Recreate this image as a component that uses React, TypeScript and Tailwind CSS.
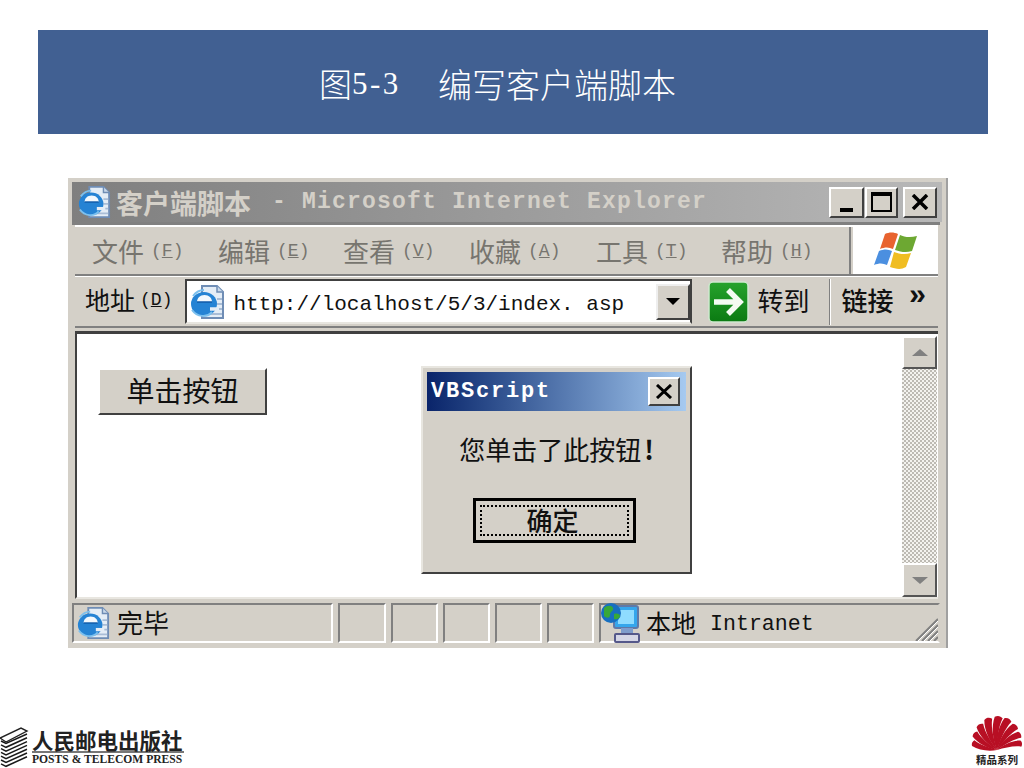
const mono = "[font-family:'Liberation_Mono','Noto_Sans_CJK_SC',monospace]";
const cjk = "[font-family:'Noto_Sans_CJK_SC','Liberation_Sans',sans-serif]";

function IeIcon({ size = 36 }: { size?: number }) {
  return (
    <svg width={size} height={size} viewBox="0 0 36 36">
      <path d="M13 2h15l6 6v26H13z" fill="#e4edf6" stroke="#6f8db5" strokeWidth="2" />
      <path d="M28 2v6h6" fill="#c9d9ea" stroke="#6f8db5" strokeWidth="1.500" />
      <path d="M20 30h13M26 25h7M28 20h5M28 15h5" stroke="#a9bdd6" strokeWidth="2" />
      <ellipse cx="15" cy="20" rx="13" ry="12" fill="#2583d4" />
      <path d="M8 18c0-4 3-7 7.500-7S23 14 23 18z" fill="#f2f8fd" />
      <path d="M8 18h15" stroke="#0f5aa8" strokeWidth="1.500" />
      <path d="M21 25h9" stroke="#e4edf6" strokeWidth="3.500" />
      <path d="M3 26c5 7 15 8 20 2" fill="none" stroke="#7cc0ee" strokeWidth="2" />
      <path d="M4 12c3-4 7-6 11-6" fill="none" stroke="#7cc0ee" strokeWidth="2" />
    </svg>
  );
}

function WinFlag() {
  return (
    <svg width="44" height="40" viewBox="0 0 44 40">
      <path d="M11 3c4-2 9-2 13 0l-5 15c-4-2-8-2-13 0z" fill="#e8632f" />
      <path d="M26 4c4 2 10 3 17 1l-5 15c-6 2-11 1-17-1z" fill="#6da832" />
      <path d="M5 20c5-2 9-2 13 0l-5 14c-4-2-8-2-13 0z" fill="#4b8fe0" />
      <path d="M20 21c5 2 11 3 17 1l-5 14c-5 3-10 2-16 0z" fill="#f0bd22" />
    </svg>
  );
}

function GoIcon() {
  return (
    <svg width="41" height="42" viewBox="0 0 41 42">
      <defs>
        <linearGradient id="goGrad" x1="0" y1="0" x2="0" y2="1">
          <stop offset="0" stopColor="#26a32c" />
          <stop offset="1" stopColor="#0b7a12" />
        </linearGradient>
      </defs>
      <rect x="1" y="1" width="39" height="40" rx="4" fill="url(#goGrad)" stroke="#cfe8cf" strokeWidth="1.500" />
      <path d="M6 21h24M20 9l12 12-12 12" fill="none" stroke="#f4fbf2" strokeWidth="5.500" />
    </svg>
  );
}

function NetIcon() {
  return (
    <svg width="40" height="42" viewBox="0 0 40 42">
      <rect x="13" y="4" width="24" height="22" rx="2" fill="#35a6ec" stroke="#5f79a8" strokeWidth="2" />
      <rect x="17" y="8" width="16" height="14" fill="#8fdcff" />
      <rect x="20" y="26" width="12" height="6" fill="#7f9ccc" />
      <rect x="14" y="32" width="24" height="8" rx="1" fill="#d5d6e6" stroke="#55588a" strokeWidth="2" />
      <circle cx="10" cy="11" r="10" fill="#176fc0" />
      <path d="M3 6c3-3 8-3 9 0s-3 3-3 7-4 3-6 1zM13 12c3-1 6 0 6 2s-3 4-6 3z" fill="#38a838" />
    </svg>
  );
}

function Books() {
  const rows = [0, 1, 2, 3, 4, 5, 6];
  return (
    <svg width="30" height="42" viewBox="0 0 30 42">
      <path d="M0 12L21 2l6 3L6 16z" fill="#fff" stroke="#222" strokeWidth="1.400" />
      {rows.map((i) => (
        <path key={i} d={`M1 ${15 + i * 3.800}l5 ${2.500}L27 ${8 + i * 3.800}`} fill="none" stroke="#1a1a1a" strokeWidth="1.500" />
      ))}
    </svg>
  );
}

function Fan() {
  const leaves = [
    [-74, 0.76],
    [-54, 0.84],
    [-35, 0.92],
    [-16, 0.98],
    [3, 1],
    [20, 0.98],
    [38, 0.92],
    [56, 0.84],
    [75, 0.76],
  ];
  return (
    <svg width="54" height="38" viewBox="0 0 54 38">
      {leaves.map(([a, s]) => (
        <path
          key={a}
          d="M27 37C22 27 20 14 23 4c3-2 6-1 8 1C27 14 27 26 27 37z"
          fill="#b80f24"
          transform={`rotate(${a} 27 37) translate(27 37) scale(${s}) translate(-27 -37)`}
        />
      ))}
    </svg>
  );
}

function Menu({ name, k, w }: { name: string; k: string; w: string }) {
  return (
    <div className={`${w} flex items-center text-[#77756f]`}>
      <span className={`${cjk} text-[26px] leading-none`}>{name}</span>
      <span className={`${mono} text-[18px] leading-none ml-[7px]`}>
        (<span className="underline">{k}</span>)
      </span>
    </div>
  );
}

function Pane({ w }: { w: string }) {
  return <div className={`${w} h-[40px] border-2 border-t-[#808080] border-l-[#808080] border-b-white border-r-white`} />;
}

export default function App() {
  return (
    <div className="relative w-[1024px] h-[768px] bg-white overflow-hidden flex flex-col">
      <div className="mt-[30px] ml-[38px] w-[950px] h-[104px] bg-[#416092] flex items-center pl-[281px] pt-[3px] text-white">
        <span className={`${cjk} text-[33px] leading-none font-light`}>图</span>
        <span className="[font-family:'Liberation_Serif',serif] text-[31px] leading-none tracking-[2.500px] whitespace-nowrap w-[50px] shrink-0">5-3</span>
        <span className={`${cjk} text-[34px] leading-none font-light ml-[36px] whitespace-nowrap`}>编写客户端脚本</span>
      </div>

      <div className="relative mt-[44px] ml-[68px] w-[880px] h-[470px] bg-[#d4d0c8] border-r-2 border-[#a0a0a0] flex flex-col pt-[4px] pl-[4px] pr-[8px]">
        <div className="h-[40px] shrink-0 bg-gradient-to-r from-[#7f7f7f] to-[#b8b8b8] flex items-center pl-[5px] pr-[5px] -mr-[4px]">
          <IeIcon size={34} />
          <span className={`${cjk} text-[27px] leading-none font-bold text-[#d4d0c8] ml-[5px]`}>客户端脚本</span>
          <span className={`${mono} text-[23px] leading-none font-bold text-[#d4d0c8] tracking-[1.200px] ml-[21px] whitespace-nowrap`}>- Microsoft Internet Explorer</span>
          <div className="ml-auto flex">
            <div className="w-[35px] h-[31px] bg-[#d4d0c8] border-2 border-t-white border-l-white border-b-[#404040] border-r-[#404040] flex items-center justify-center">
              <div className="w-[13px] h-[4px] bg-black mt-[15px]" />
            </div>
            <div className="ml-[1px] w-[33px] h-[31px] bg-[#d4d0c8] border-2 border-t-white border-l-white border-b-[#404040] border-r-[#404040] flex items-center justify-center">
              <div className="w-[21px] h-[20px] border-2 border-t-[4px] border-black" />
            </div>
            <div className="ml-[5px] w-[34px] h-[31px] bg-[#d4d0c8] border-2 border-t-white border-l-white border-b-[#404040] border-r-[#404040] flex items-center justify-center">
              <svg width="18" height="16" viewBox="0 0 18 16"><path d="M2 1l14 14M16 1L2 15" stroke="#000" strokeWidth="3.500" /></svg>
            </div>
          </div>
        </div>

        <div className="h-[3px] shrink-0 bg-[#808080] -mr-[2px]" />
        <div className="h-[2px] shrink-0 bg-white ml-[3px]" />
        <div className="h-[49px] shrink-0 flex border-b-2 border-[#808080] ml-[3px]">
          <div className="w-[776px] flex items-center pl-[17px] border-r-2 border-[#808080]">
            <Menu name="文件" k="F" w="w-[126px]" />
            <Menu name="编辑" k="E" w="w-[125px]" />
            <Menu name="查看" k="V" w="w-[126px]" />
            <Menu name="收藏" k="A" w="w-[127px]" />
            <Menu name="工具" k="T" w="w-[125px]" />
            <Menu name="帮助" k="H" w="w-[123px]" />
          </div>
          <div className="ml-[2px] flex-1 bg-white flex items-center justify-center">
            <WinFlag />
          </div>
        </div>

        <div className="h-[52px] shrink-0 flex items-center border-t border-white border-b-2 border-b-[#808080] text-[#111] ml-[3px]">
          <span className={`${cjk} text-[25px] leading-none ml-[10px] -mt-[4px]`}>地址</span>
          <span className={`${mono} text-[18px] leading-none ml-[5px] -mt-[4px]`}>
            (<span className="underline">D</span>)
          </span>
          <div className="ml-[13px] w-[507px] h-[45px] bg-white border-2 border-t-[#404040] border-l-[#404040] border-r-[#404040] border-b-[#e8e6e0] flex items-center pl-[2px]">
            <IeIcon size={36} />
            <span className={`${mono} text-[21px] leading-none ml-[8px] mt-[6px] whitespace-nowrap`}>http://localhost/5/3/index. asp</span>
            <div className="ml-auto h-[36px] w-[34px] bg-[#d4d0c8] border-2 border-t-[#eee] border-l-[#eee] border-b-[#404040] border-r-[#404040] flex items-center justify-center">
              <div className="w-0 h-0 border-x-[7px] border-x-transparent border-t-[7px] border-t-black" />
            </div>
          </div>
          <div className="ml-[16px]"><GoIcon /></div>
          <span className={`${cjk} text-[26px] leading-none ml-[8px] -mt-[3px]`}>转到</span>
          <div className="ml-[20px] w-[2px] h-[46px] bg-[#808080] border-r border-white" />
          <span className={`${cjk} text-[26px] leading-none ml-[10px] font-medium -mt-[4px]`}>链接</span>
          <span className={`${mono} text-[30px] leading-none font-bold ml-[15px] -mt-[12px]`}>»</span>
        </div>

        <div className="mt-[3px] ml-[3px] h-[268px] shrink-0 flex border-2 border-t-[3px] border-[#404040] border-r-0 border-b-[#e8e6e0] bg-white">
          <div className="flex-1 pl-[21px] pt-[34px]">
            <div className={`w-[169px] h-[47px] pb-[3px] bg-[#d4d0c8] border-2 border-t-white border-l-white border-b-[#404040] border-r-[#404040] flex items-center justify-center ${cjk} text-[28px] leading-none text-[#111]`}>单击按钮</div>
          </div>
          <div className="w-[35px] mr-[1px] flex flex-col border-t-2 border-white bg-[repeating-conic-gradient(#bdbab3_0%_25%,#f4f3ef_0%_50%)] bg-[length:4px_4px]">
            <div className="h-[33px] bg-[#d4d0c8] border-2 border-t-white border-l-white border-b-[#555] border-r-[#555] flex items-center justify-center">
              <div className="w-0 h-0 border-x-[8px] border-x-transparent border-b-[7px] border-b-[#808080]" />
            </div>
            <div className="flex-1" />
            <div className="h-[34px] bg-[#d4d0c8] border-2 border-t-white border-l-white border-b-[#555] border-r-[#555] flex items-center justify-center">
              <div className="w-0 h-0 border-x-[8px] border-x-transparent border-t-[7px] border-t-[#808080]" />
            </div>
          </div>
        </div>

        <div className="mt-[4px] h-[40px] shrink-0 flex gap-[5px] -mr-[2px]">
          <div className="w-[261px] h-[40px] border-2 border-t-[#808080] border-l-[#808080] border-b-white border-r-white flex items-center pl-[2px]">
            <IeIcon size={34} />
            <span className={`${cjk} text-[26px] leading-none ml-[7px] -mt-[2px] text-[#111]`}>完毕</span>
          </div>
          <Pane w="w-[48px]" />
          <Pane w="w-[47px]" />
          <Pane w="w-[47px]" />
          <Pane w="w-[47px]" />
          <Pane w="w-[47px]" />
          <div className="relative flex-1 h-[40px] border-2 border-t-[#808080] border-l-[#808080] border-b-white border-r-transparent flex items-center text-[#111]">
            <NetIcon />
            <span className={`${cjk} text-[25px] leading-none ml-[5px] -mt-[1px]`}>本地</span>
            <span className={`${mono} text-[21.600px] leading-none ml-[14px] mt-[3px]`}>Intranet</span>
            <svg className="absolute right-0 bottom-0" width="24" height="24" viewBox="0 0 24 24">
              <path d="M2 24L24 2M8 24L24 8M14 24L24 14M20 24l4-4" stroke="#808080" strokeWidth="2" />
              <path d="M4 24L24 4M10 24L24 10M16 24l8-8" stroke="#fff" strokeWidth="1" />
            </svg>
          </div>
        </div>

        <div className="absolute left-[353px] top-[188px] w-[271px] h-[208px] bg-[#d4d0c8] border-2 border-t-[#e8e6e0] border-l-[#e8e6e0] border-b-[#404040] border-r-[#404040] p-[4px] flex flex-col items-center">
          <div className="w-full h-[39px] shrink-0 bg-gradient-to-r from-[#0a246a] to-[#a6caf0] flex items-center pl-[4px] pr-[6px]">
            <span className={`${mono} text-[22px] leading-none font-bold tracking-[1.800px] text-white`}>VBScript</span>
            <div className="ml-auto w-[32px] h-[29px] bg-[#d4d0c8] border-2 border-t-white border-l-white border-b-[#404040] border-r-[#404040] flex items-center justify-center">
              <svg width="18" height="15" viewBox="0 0 18 15"><path d="M2 1l14 13M16 1L2 14" stroke="#000" strokeWidth="3" /></svg>
            </div>
          </div>
          <div className={`mt-[24px] text-[#111] ${cjk} text-[26px] leading-[28px] whitespace-nowrap`}>
            您单击了此按钮<span className="font-bold ml-[3px]">!</span>
          </div>
          <div className="mt-[35px] mr-[4px] w-[163px] h-[45px] border-[3px] border-black bg-[#d4d0c8] p-[4px]">
            <div className={`w-full h-full pr-[4px] pb-[2px] border-2 border-dotted border-black flex items-center justify-center ${cjk} text-[26px] leading-none font-medium text-[#111]`}>确定</div>
          </div>
        </div>
      </div>

      <div className="mt-auto flex items-end justify-between h-[56px]">
        <div className="flex items-end">
          <Books />
          <div className="ml-[2px] mb-[2px] w-[152px] flex flex-col text-[#222]">
            <span className={`${cjk} text-[21.500px] leading-[23px] font-bold whitespace-nowrap border-b-2 border-[#777]`}>人民邮电出版社</span>
            <span className="[font-family:'Liberation_Serif',serif] text-[11.600px] leading-[13px] font-bold whitespace-nowrap">POSTS &amp; TELECOM PRESS</span>
          </div>
        </div>
        <div className="flex flex-col items-center">
          <Fan />
          <span className={`${cjk} text-[10.500px] leading-[12px] mt-[3px] mb-[2px] font-bold text-[#222]`}>精品系列</span>
        </div>
      </div>
    </div>
  );
}
